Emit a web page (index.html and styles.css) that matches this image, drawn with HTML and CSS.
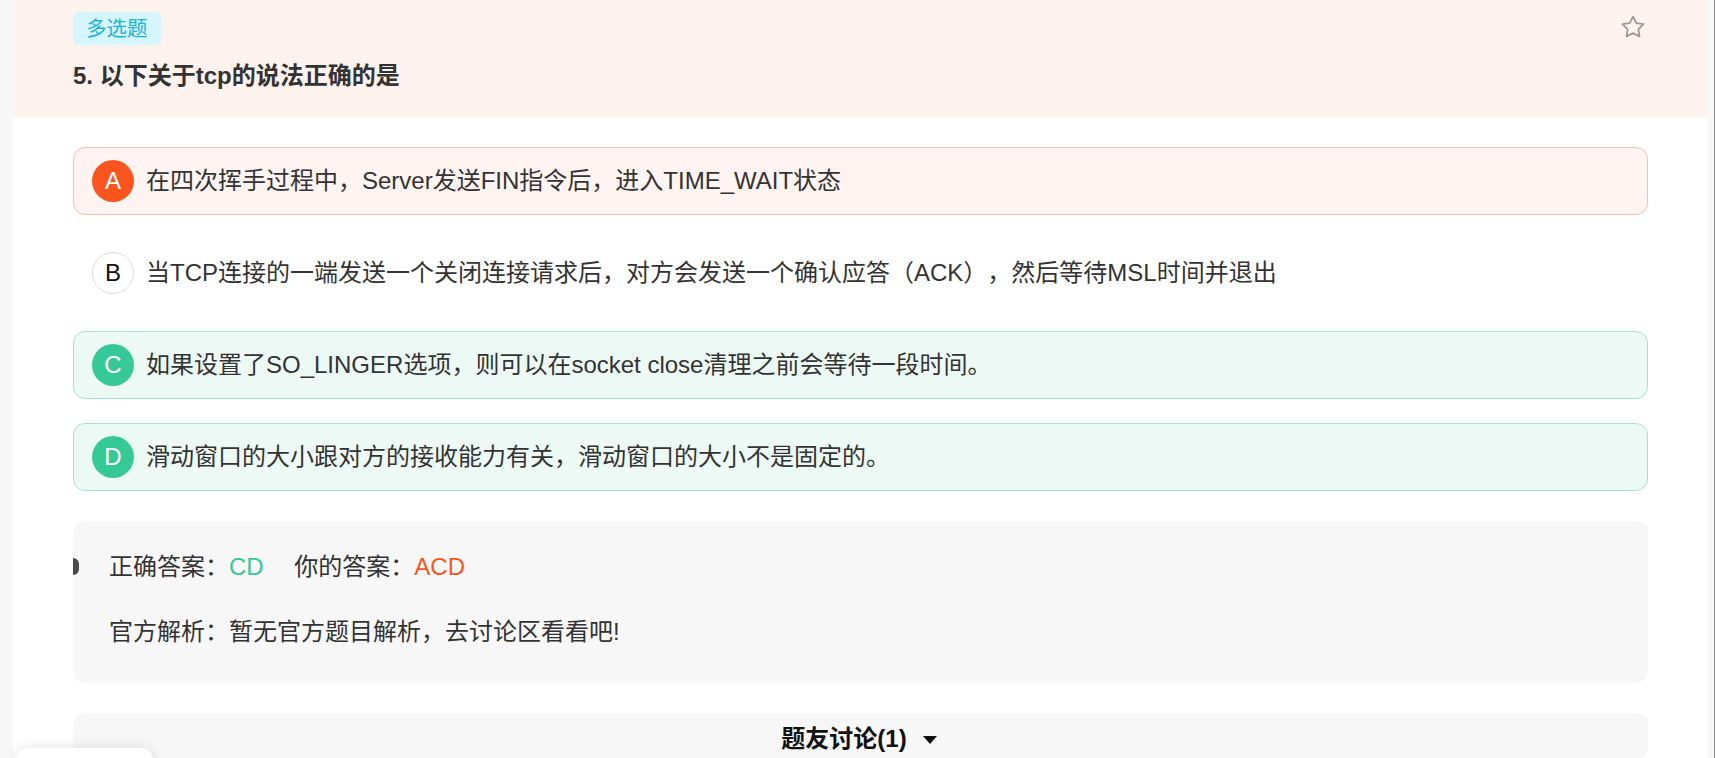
FILE: index.html
```html
<!DOCTYPE html>
<html lang="zh-CN">
<head>
<meta charset="utf-8">
<title>多选题</title>
<link rel="stylesheet" href="styles.css">
</head>
<body>
<div class="page">
  <div class="q-head">
    <div class="q-head-main">
      <span class="q-tag">多选题</span>
      <h1 class="q-title">5. 以下关于tcp的说法正确的是</h1>
    </div>
    <svg class="q-star" width="24" height="24" viewBox="0 0 24 24" fill="none" stroke="#999" stroke-width="1.8" stroke-linejoin="round">
      <path d="M12 1.6L15.3 8.1 22.4 9.2 17.4 14.3 18.5 21.4 12 18.1 5.5 21.4 6.6 14.3 1.6 9.2 8.7 8.1Z"/>
    </svg>
  </div>

  <div class="options">
    <div class="opt opt-wrong">
      <span class="opt-key key-wrong">A</span>
      <span class="opt-text">在四次挥手过程中，Server发送FIN指令后，进入TIME_WAIT状态</span>
    </div>
    <div class="opt">
      <span class="opt-key key-plain">B</span>
      <span class="opt-text">当TCP连接的一端发送一个关闭连接请求后，对方会发送一个确认应答（ACK），然后等待MSL时间并退出</span>
    </div>
    <div class="opt opt-right">
      <span class="opt-key key-right">C</span>
      <span class="opt-text">如果设置了SO_LINGER选项，则可以在socket close清理之前会等待一段时间。</span>
    </div>
    <div class="opt opt-right">
      <span class="opt-key key-right">D</span>
      <span class="opt-text">滑动窗口的大小跟对方的接收能力有关，滑动窗口的大小不是固定的。</span>
    </div>
  </div>

  <div class="answer">
    <span class="answer-dot"></span>
    <div class="answer-row">
      <span>正确答案：</span><span class="ans-right">CD</span>
      <span class="ans-gap">你的答案：</span><span class="ans-wrong">ACD</span>
    </div>
    <div class="answer-row answer-row-2">官方解析：暂无官方题目解析，去讨论区看看吧!</div>
  </div>

  <div class="discuss">
    <span class="discuss-title">题友讨论(1)</span>
    <span class="discuss-caret"></span>
  </div>
</div>
<div class="float-panel"></div>
</body>
</html>
```

FILE: styles.css
```css
* { box-sizing: border-box; }

html, body {
  margin: 0;
  padding: 0;
  height: 100%;
  overflow: hidden;
}

body {
  background: #f7f7f7;
  font-family: "Liberation Sans", "Noto Sans CJK SC", sans-serif;
  color: #333;
  position: relative;
  text-spacing-trim: space-all;
}

body::after {
  content: "";
  position: absolute;
  top: 0;
  right: 0;
  width: 1px;
  height: 100%;
  background: #8a8a8a;
}

.page {
  margin-left: 13px;
  width: 1695px;
  min-height: 100%;
  background: #fff;
}

.q-head {
  display: flex;
  justify-content: space-between;
  align-items: flex-start;
  background: #fdf2ee;
  height: 117px;
  padding: 12px 63px 0 60px;
}

.q-head-main {
  display: flex;
  flex-direction: column;
  align-items: flex-start;
}

.q-tag {
  display: inline-block;
  height: 33px;
  line-height: 33px;
  padding: 0 13px;
  border-radius: 6px;
  background: #d5f6fd;
  color: #1bb2dc;
  font-size: 20.5px;
}

.q-title {
  margin: 16px 0 0;
  font-size: 24px;
  line-height: 30px;
  font-weight: bold;
  color: #333;
}

.q-star {
  margin-top: 3px;
}

.options {
  display: flex;
  flex-direction: column;
  gap: 24px;
  padding: 30px 60px 0;
}

.opt {
  display: flex;
  align-items: center;
  gap: 12px;
  height: 68px;
  padding: 0 18px;
  border: 1px solid transparent;
  border-radius: 12px;
}

.opt-wrong {
  background: #fff4f1;
  border-color: #ffbca7;
}

.opt-right {
  background: #edf9f5;
  border-color: #a0e5cd;
}

.opt-key {
  flex: none;
  width: 42px;
  height: 42px;
  border-radius: 50%;
  display: flex;
  align-items: center;
  justify-content: center;
  font-size: 24px;
  color: #fff;
}

.key-wrong { background: #fa551f; }
.key-right { background: #35c998; }
.key-plain {
  background: #fff;
  border: 1px solid #ddd;
  color: #111;
}

.opt-text {
  font-size: 24px;
  line-height: 36px;
  color: #333;
}

.answer {
  position: relative;
  overflow: hidden;
  margin: 30px 60px 0;
  height: 162px;
  padding: 28px 36px 0;
  background: #f7f7f7;
  border-radius: 12px;
  font-size: 24px;
  line-height: 36px;
  color: #333;
}

.answer-dot {
  position: absolute;
  left: -14px;
  top: 37px;
  width: 20px;
  height: 17px;
  border-radius: 6px;
  background: #4a4a4a;
}

.answer-row-2 {
  margin-top: 29px;
}

.ans-right { color: #35c998; }
.ans-wrong { color: #fa551f; }
.ans-gap { margin-left: 24px; }

.discuss {
  margin: 30px 60px 0;
  height: 46px;
  padding-right: 3px;
  background: #f7f7f7;
  border-radius: 12px;
  display: flex;
  align-items: center;
  justify-content: center;
  gap: 16px;
}

.discuss-title {
  font-size: 24px;
  font-weight: bold;
  color: #111;
}

.discuss-caret {
  width: 0;
  height: 0;
  margin-top: 8px;
  border-left: 7.5px solid transparent;
  border-right: 7.5px solid transparent;
  border-top: 8px solid #111;
}

.float-panel {
  position: fixed;
  left: 16px;
  top: 748px;
  width: 137px;
  height: 40px;
  background: #fff;
  border-radius: 12px;
  box-shadow: 0 0 14px rgba(0, 0, 0, 0.12);
}
```
